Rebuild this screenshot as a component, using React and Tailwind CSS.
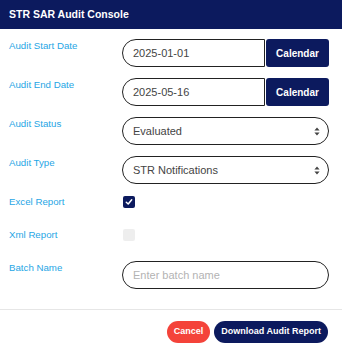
import React, { useState } from 'react';

const NAVY = 'bg-[#0c1a5e]';

function Label({ children }) {
  return (
    <div className="w-[113px] shrink-0 text-[9.7px] leading-[14px] text-[#1fa6e5]">{children}</div>
  );
}

function DateRow({ label, value }) {
  return (
    <div className="flex items-start">
      <Label>{label}</Label>
      <div className="flex flex-1 h-[28px]">
        <div className="flex-1 flex items-center border border-[#222] rounded-l-full pl-[10px] text-[11px] text-[#444]">
          {value}
        </div>
        <button className={`w-[63px] ml-[1px] ${NAVY} rounded-[3px] text-white font-bold text-[10px]`}>
          Calendar
        </button>
      </div>
    </div>
  );
}

function SelectRow({ label, value }) {
  return (
    <div className="flex items-start">
      <Label>{label}</Label>
      <div className="flex-1 h-[28px] flex items-center justify-between border border-[#222] rounded-full pl-[10px] pr-[8px] text-[11px] text-[#444]">
        <span>{value}</span>
        <svg width="6" height="9" viewBox="0 0 6 9">
          <path d="M3 0.5 L5.6 3.6 H0.4 Z M3 8.5 L5.6 5.4 H0.4 Z" fill="#444" />
        </svg>
      </div>
    </div>
  );
}

function CheckRow({ label, checked, disabled }) {
  return (
    <div className="flex items-start h-[22px]">
      <Label>{label}</Label>
      <div
        className={`mt-[1px] ml-[1px] w-[12px] h-[12px] rounded-[2px] flex items-center justify-center ${
          checked ? NAVY : 'bg-[#ececec]'
        } ${disabled ? 'opacity-90' : ''}`}
      >
        {checked && (
          <svg width="8" height="8" viewBox="0 0 8 8">
            <path d="M1.3 4.3 L3.2 6 L6.7 1.8" stroke="white" strokeWidth="1.5" fill="none" strokeLinecap="round" strokeLinejoin="round" />
          </svg>
        )}
      </div>
    </div>
  );
}

export default function App() {
  const [batch, setBatch] = useState('');

  return (
    <div className="w-[342px] h-[349px] bg-white flex flex-col font-['Liberation_Sans',Arial,sans-serif]">
      <div className={`h-[29px] ${NAVY} px-[9px] flex items-center text-white font-bold text-[10.5px]`}>
        STR SAR Audit Console
      </div>

      <div className="pt-[10px] pl-[9px] pr-[13px] flex flex-col gap-[11px]">
        <DateRow label="Audit Start Date" value="2025-01-01" />
        <DateRow label="Audit End Date" value="2025-05-16" />
        <SelectRow label="Audit Status" value="Evaluated" />
        <SelectRow label="Audit Type" value="STR Notifications" />
        <CheckRow label="Excel Report" checked />
        <CheckRow label="Xml Report" disabled />
        <div className="flex items-start">
          <Label>Batch Name</Label>
          <input
            value={batch}
            onChange={e => setBatch(e.target.value)}
            placeholder="Enter batch name"
            className="flex-1 min-w-0 h-[28px] border border-[#222] rounded-full pl-[10px] text-[11px] text-[#444] placeholder:text-[#b3b3b3] outline-none"
          />
        </div>
      </div>

      <div className="mt-auto h-[40px] border-t border-[#e6e6e6] pt-[11px] pr-[14px] flex justify-end items-start gap-[4px]">
        <button className="h-[22px] px-[7px] rounded-full bg-[#f4433a] text-white font-bold text-[9px]">
          Cancel
        </button>
        <button className={`h-[22px] px-[7px] rounded-full ${NAVY} text-white font-bold text-[9px]`}>
          Download Audit Report
        </button>
      </div>
    </div>
  );
}
